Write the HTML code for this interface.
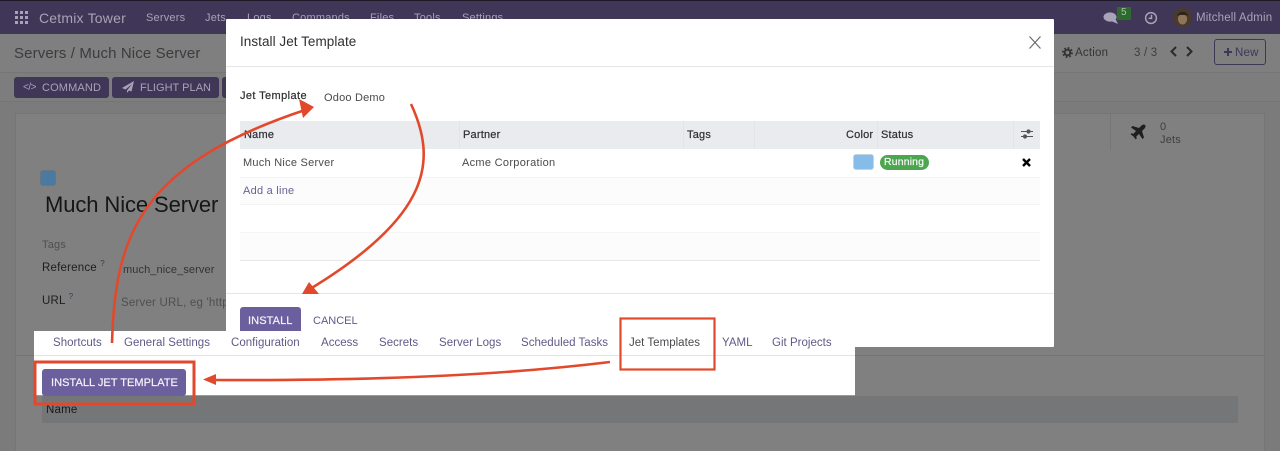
<!DOCTYPE html>
<html><head><meta charset="utf-8"><style>
html,body{margin:0;padding:0}
body{width:1280px;height:451px;position:relative;overflow:hidden;background:#7b7b7b;font-family:"Liberation Sans",sans-serif}
#w{position:absolute;left:0;top:0;width:1280px;height:451px;filter:blur(.35px)}
.b{position:absolute}
.t{position:absolute;white-space:nowrap;font-size:11.5px;line-height:14px;color:#4a4a4e;letter-spacing:.2px}
.n{color:#a8a3b6;top:11px;font-size:11px}
.d{color:#2f2f33}
.tab{color:#5f5a86;top:336px;font-size:11.5px;letter-spacing:.02px}
.h{color:#2e2f33;font-weight:normal;top:128px;-webkit-text-stroke:.2px #2e2f33}
</style></head><body><div id="w">
<!-- background -->
<div class="b" style="left:0;top:0;width:1280px;height:34px;background:#3f3658"></div>
<div class="b" style="left:0;top:0;width:1280px;height:1px;background:#1d1a28"></div>
<div class="b" style="left:0;top:34px;width:1280px;height:38px;background:#7f7f7f"></div>
<div class="b" style="left:0;top:72px;width:1280px;height:1px;background:#767676"></div>
<div class="b" style="left:0;top:73px;width:1280px;height:28px;background:#7d7d7d"></div>
<div class="b" style="left:0;top:101px;width:1280px;height:1px;background:#757575"></div>
<div class="b" style="left:15px;top:113px;width:1250px;height:338px;background:#808080;box-sizing:border-box;border:1px solid #767676;border-bottom:0"></div>
<div class="b" style="left:1110px;top:113px;width:155px;height:37px;box-sizing:border-box;border-left:1px solid #767676"></div>
<div class="b" style="left:15px;top:355px;width:1250px;height:1px;background:#757575"></div>
<div class="b" style="left:42px;top:396px;width:1196px;height:27px;background:#757678"></div>
<!-- nav -->
<svg class="b" style="left:15px;top:11px" width="13" height="13" fill="#a8a3b6"><rect x="0" y="0" width="3" height="3"/><rect x="5" y="0" width="3" height="3"/><rect x="10" y="0" width="3" height="3"/><rect x="0" y="5" width="3" height="3"/><rect x="5" y="5" width="3" height="3"/><rect x="10" y="5" width="3" height="3"/><rect x="0" y="10" width="3" height="3"/><rect x="5" y="10" width="3" height="3"/><rect x="10" y="10" width="3" height="3"/></svg>
<div class="t" style="left:39px;top:10px;font-size:14px;color:#a8a3b6;line-height:16px">Cetmix Tower</div>
<div class="t n" style="left:146px">Servers</div>
<div class="t n" style="left:205px">Jets</div>
<div class="t n" style="left:247px">Logs</div>
<div class="t n" style="left:292px">Commands</div>
<div class="t n" style="left:370px">Files</div>
<div class="t n" style="left:414px">Tools</div>
<div class="t n" style="left:462px">Settings</div>
<svg class="b" style="left:1103px;top:11px" width="16" height="14" fill="#a8a3b6"><ellipse cx="7" cy="6" rx="6.5" ry="4.6"/><path d="M8 10l7 3-2.500-5z"/></svg>
<div class="b" style="left:1117px;top:7px;width:14px;height:13px;background:#2c6a2e"></div>
<div class="t" style="left:1121px;top:6px;font-size:10px;color:#a9c4a5">5</div>
<svg class="b" style="left:1144px;top:11px" width="14" height="14" fill="none" stroke="#a8a3b6" stroke-width="1.500"><circle cx="7" cy="7" r="5.400"/><path d="M7.500 3.800V7.400H4.600"/></svg>
<svg class="b" style="left:1173px;top:8px" width="19" height="19"><circle cx="9.500" cy="9.500" r="9.500" fill="#4a3a2c"/><ellipse cx="9.500" cy="11" rx="4.600" ry="5.500" fill="#8f745c"/><path d="M4 8c1-5 10-6 11 0-3-1.500-8-1.500-11 0z" fill="#2e231b"/></svg>
<div class="t n" style="left:1196px;font-size:11.500px;letter-spacing:.15px;top:11px">Mitchell Admin</div>
<!-- control panel -->
<div class="t" style="left:14px;top:45px;font-size:15px;line-height:18px;color:#3b3b40;letter-spacing:.12px">Servers / Much Nice Server</div>
<div class="b" style="left:14px;top:77px;width:95px;height:21px;background:#3f3658;border-radius:3px"></div>
<div class="b" style="left:112px;top:77px;width:107px;height:21px;background:#3f3658;border-radius:3px"></div>
<div class="b" style="left:222px;top:77px;width:8px;height:21px;background:#3f3658;border-radius:3px"></div>
<div class="t" style="left:23px;top:81px;font-size:10px;color:#a8a3b6;letter-spacing:-.5px">&lt;/&gt;</div>
<div class="t" style="left:42px;top:81px;color:#a8a3b6;font-size:11px;letter-spacing:.15px">COMMAND</div>
<svg class="b" style="left:122px;top:81px" width="12" height="12" fill="#a8a3b6"><path d="M12 0L0 7l3.500 1.500L10 3 5 9.500V12l2-2.500 2.500 1z"/></svg>
<div class="t" style="left:140px;top:81px;color:#a8a3b6;font-size:11px;letter-spacing:.03px">FLIGHT PLAN</div>
<svg class="b" style="left:1062px;top:47px" width="11" height="11" fill="none" stroke="#333"><circle cx="5.500" cy="5.500" r="4.400" stroke-width="2" stroke-dasharray="1.750 1.700"/><circle cx="5.500" cy="5.500" r="2.800" stroke-width="1.900"/></svg>
<div class="t" style="left:1075px;top:46px;color:#333438;font-size:11.500px">Action</div>
<div class="t" style="left:1134px;top:46px;color:#3e3e42;font-size:11.500px">3 / 3</div>
<svg class="b" style="left:1168px;top:46px" width="32" height="11" fill="none" stroke="#2a2a2e" stroke-width="2"><path d="M8 1L3.500 5.500 8 10M19 1l4.500 4.500L19 10"/></svg>
<div class="b" style="left:1214px;top:39px;width:52px;height:26px;box-sizing:border-box;border:1px solid #3f3658;border-radius:3px"></div>
<svg class="b" style="left:1223px;top:47px" width="10" height="10" stroke="#3f3658" stroke-width="2"><path d="M5 1v8M1 5h8"/></svg>
<div class="t" style="left:1235px;top:46px;color:#3f3658;font-size:11.500px">New</div>
<!-- jets stat -->
<svg class="b" style="left:1130px;top:124px" width="16" height="16" viewBox="0 0 16 16" fill="#1f1f22"><path d="M15 1c-1-1-2.500-.5-3.500.5L9 4 2.500 2 1 3.500 6 7 3.500 9.700 1.500 9.300.5 10.300 3.500 12.500 5.700 15.500l1-1-.4-2L9 10l3.500 5 1.500-1.500L12 7l2.500-2.500C15.500 3.500 16 2 15 1z"/></svg>
<div class="t" style="left:1160px;top:120px;font-size:11px;color:#3e3e42">0</div>
<div class="t" style="left:1160px;top:133px;font-size:11px;color:#3e3e42">Jets</div>
<!-- form -->
<div class="b" style="left:40px;top:170px;width:16px;height:16px;box-sizing:border-box;background:#4a7aa2;border:1.500px solid #6b7580;border-radius:3px"></div>
<div class="t" style="left:45px;top:191px;font-size:22px;line-height:27px;color:#161618;letter-spacing:-.1px">Much Nice Server</div>
<div class="t" style="left:42px;top:238px;color:#4f4f52;font-size:11px">Tags</div>
<div class="t" style="left:42px;top:261px;color:#1d1d20;font-size:11.500px">Reference <sup style="font-size:8px;line-height:0;color:#3f3658">?</sup></div>
<div class="t" style="left:123px;top:263px;color:#333336;font-size:11px;letter-spacing:.1px">much_nice_server</div>
<div class="t" style="left:42px;top:294px;color:#1d1d20;font-size:11.500px">URL <sup style="font-size:8px;line-height:0;color:#3f3658">?</sup></div>
<div class="t" style="left:121px;top:296px;color:#4f4f52;font-size:11.500px">Server URL, eg 'http</div>
<div class="t" style="left:46px;top:403px;color:#1a1a1c;font-size:11.500px">Name</div>
<!-- modal -->
<div class="b" style="left:226px;top:19px;width:828px;height:328px;background:#fff;border-radius:1px"></div>
<div class="b" style="left:226px;top:66px;width:828px;height:1px;background:#e6e6e8"></div>
<div class="t d" style="left:240px;top:34px;font-size:13.500px;line-height:16px;letter-spacing:.05px">Install Jet Template</div>
<svg class="b" style="left:1028px;top:36px" width="14" height="13" fill="none" stroke="#6b6b6e" stroke-width="1.200"><path d="M1.500.5l11 12M12.500.5l-11 12"/></svg>
<div class="t d" style="left:240px;top:89px;font-size:11px;-webkit-text-stroke:.2px #2f2f33;letter-spacing:.4px">Jet Template</div>
<div class="t" style="left:324px;top:91px;font-size:11px;letter-spacing:.2px">Odoo Demo</div>
<!-- table -->
<div class="b" style="left:240px;top:121px;width:800px;height:28px;background:#e9ebee"></div>
<div class="b" style="left:459px;top:121px;width:1px;height:28px;background:#e2e4e7"></div>
<div class="b" style="left:683px;top:121px;width:1px;height:28px;background:#e2e4e7"></div>
<div class="b" style="left:754px;top:121px;width:1px;height:28px;background:#e2e4e7"></div>
<div class="b" style="left:877px;top:121px;width:1px;height:28px;background:#e2e4e7"></div>
<div class="b" style="left:1013px;top:121px;width:1px;height:28px;background:#e2e4e7"></div>
<div class="t h" style="left:244px;font-size:11px">Name</div>
<div class="t h" style="left:463px;font-size:11px">Partner</div>
<div class="t h" style="left:687px;font-size:11px">Tags</div>
<div class="t h" style="left:846px;font-size:11px">Color</div>
<div class="t h" style="left:881px;font-size:11px">Status</div>
<svg class="b" style="left:1021px;top:128px" width="12" height="12" fill="none" stroke="#555" stroke-width="1"><path d="M0 3.500h12M0 8.500h12"/><circle cx="7.500" cy="3.500" r="1.600" fill="#555"/><circle cx="4" cy="8.500" r="1.600" fill="#555"/></svg>
<div class="b" style="left:240px;top:177px;width:800px;height:1px;background:#f4f4f5"></div>
<div class="b" style="left:240px;top:178px;width:800px;height:26px;background:#fcfcfc"></div>
<div class="b" style="left:240px;top:204px;width:800px;height:1px;background:#f3f3f4"></div>
<div class="b" style="left:240px;top:232px;width:800px;height:1px;background:#f5f5f6"></div>
<div class="b" style="left:240px;top:233px;width:800px;height:27px;background:#fcfcfc"></div>
<div class="b" style="left:240px;top:260px;width:800px;height:1px;background:#e9e9eb"></div>
<div class="t" style="left:243px;top:156px;font-size:11px;letter-spacing:.25px">Much Nice Server</div>
<div class="t" style="left:462px;top:156px;font-size:11px;letter-spacing:.3px">Acme Corporation</div>
<div class="b" style="left:853px;top:154px;width:21px;height:16px;box-sizing:border-box;background:#85bcea;border:1px solid #c6d4e0;border-radius:3px"></div>
<div class="b" style="left:880px;top:155px;width:49px;height:15px;background:#4ca64f;border-radius:8px"></div>
<div class="t" style="left:884px;top:156px;font-size:10.500px;line-height:13px;color:#f2f8f2;-webkit-text-stroke:.25px #f2f8f2;letter-spacing:.15px">Running</div>
<svg class="b" style="left:1022px;top:158px" width="9" height="9" stroke="#000" stroke-width="2.400"><path d="M1 1l7 7M8 1L1 8"/></svg>
<div class="t" style="left:243px;top:184px;font-size:11px;letter-spacing:.25px;color:#6a5f96">Add a line</div>
<div class="b" style="left:226px;top:293px;width:828px;height:1px;background:#e6e6e8"></div>
<div class="b" style="left:240px;top:307px;width:61px;height:25px;background:#6c5f9e;border-radius:3px 3px 0 0"></div>
<div class="t" style="left:248px;top:314px;font-size:11px;color:#f4f3f8;-webkit-text-stroke:.2px #f4f3f8;letter-spacing:.1px">INSTALL</div>
<div class="t" style="left:313px;top:314px;font-size:11px;color:#5f5a86;letter-spacing:0">CANCEL</div>
<!-- overlay panel -->
<div class="b" style="left:34px;top:331px;width:821px;height:64px;background:#fff;box-shadow:0 1px 0 #9a9a9a"></div>
<div class="b" style="left:34px;top:355px;width:821px;height:1px;background:#e4e4e7"></div>
<div class="t tab" style="left:53px">Shortcuts</div>
<div class="t tab" style="left:124px">General Settings</div>
<div class="t tab" style="left:231px">Configuration</div>
<div class="t tab" style="left:321px">Access</div>
<div class="t tab" style="left:379px">Secrets</div>
<div class="t tab" style="left:439px">Server Logs</div>
<div class="t tab" style="left:521px">Scheduled Tasks</div>
<div class="t tab" style="left:629px;color:#4a4a4e">Jet Templates</div>
<div class="t tab" style="left:722px">YAML</div>
<div class="t tab" style="left:772px">Git Projects</div>
<div class="b" style="left:42px;top:369px;width:144px;height:27px;background:#6c5f9e;border-radius:3px"></div>
<div class="t" style="left:51px;top:376px;font-size:11px;color:#f4f3f8;-webkit-text-stroke:.2px #f4f3f8;letter-spacing:.05px">INSTALL JET TEMPLATE</div>
<!-- red annotations -->
<svg class="b" style="left:0;top:0" width="1280" height="451" fill="none" stroke="#e2492c">
<rect x="35" y="362" width="159" height="42" stroke-width="3"/>
<rect x="620.500" y="318.500" width="94" height="51" stroke-width="2.200"/>
<path d="M112 343C115 235 140 165 305 110" stroke-width="2.600"/>
<path d="M411 104C437 160 432 215 310 289" stroke-width="2.600"/>
<path d="M610 362C520 373 400 381 212 380" stroke-width="2.600"/>
<path d="M314 107L299 99 303 118z" fill="#e2492c" stroke="none"/>
<path d="M302 294L319 294 309 282z" fill="#e2492c" stroke="none"/>
<path d="M203 379.500L216 374 216 385z" fill="#e2492c" stroke="none"/>
</svg>
</div></body></html>
